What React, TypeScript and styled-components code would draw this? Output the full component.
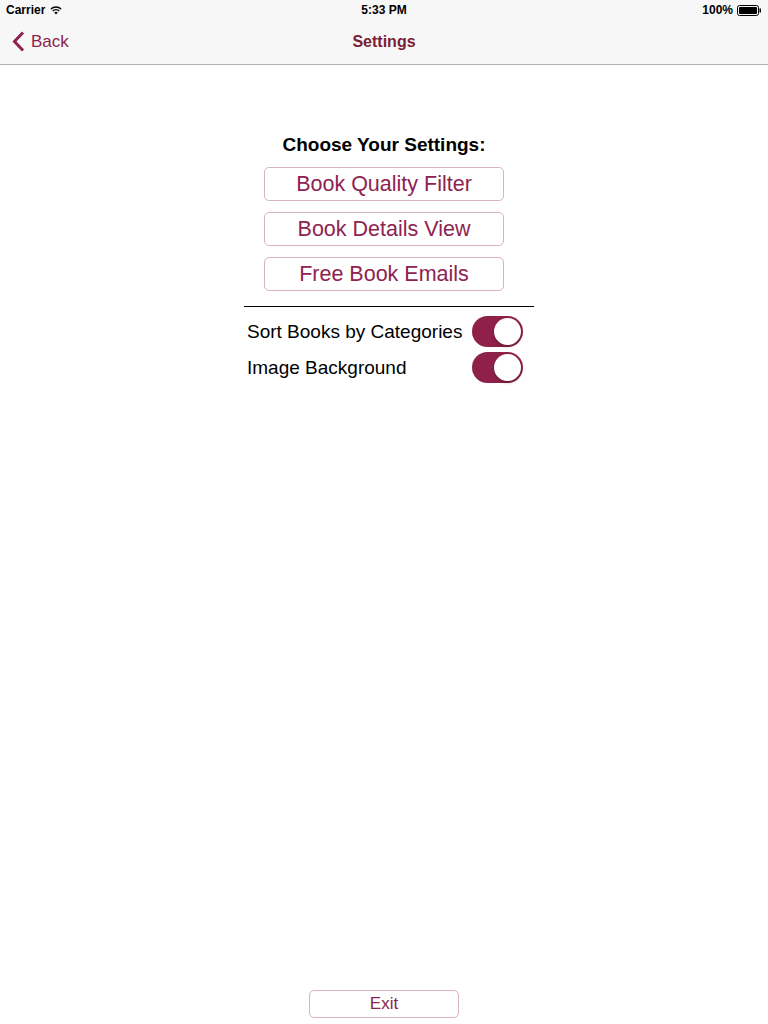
import styled, { createGlobalStyle } from 'styled-components';

const GlobalStyle = createGlobalStyle`
  html, body {
    margin: 0;
    padding: 0;
    background: #ffffff;
    font-family: "Liberation Sans", Arial, sans-serif;
  }
  * { box-sizing: border-box; }
`;

const Page = styled.div`
  height: 1024px;
  display: flex;
  flex-direction: column;
  background: #ffffff;
`;

const StatusBar = styled.div`
  height: 20px;
  display: grid;
  grid-template-columns: 1fr auto 1fr;
  align-items: center;
  padding: 0 6px;
  background: #f7f7f7;
  font-size: 12px;
  font-weight: 700;
  color: #000;
`;

const StatusLeft = styled.div`
  display: flex;
  align-items: center;
  gap: 5px;
`;

const StatusRight = styled.div`
  display: flex;
  align-items: center;
  justify-content: flex-end;
  gap: 4px;
`;

const NavBar = styled.div`
  height: 45px;
  display: grid;
  grid-template-columns: 1fr auto 1fr;
  align-items: center;
  padding: 0 12px 1px;
  background: #f7f7f7;
  border-bottom: 1px solid #b2b2b2;
`;

const BackButton = styled.div`
  display: flex;
  align-items: center;
  gap: 6px;
  color: #8e2350;
  font-size: 17px;
`;

const NavTitle = styled.div`
  color: #7b1d34;
  font-size: 16px;
  font-weight: 700;
`;

const Content = styled.div`
  width: 300px;
  margin: 0 auto;
  padding-top: 68px;
  display: flex;
  flex-direction: column;
  align-items: center;
`;

const Heading = styled.div`
  font-size: 19px;
  line-height: 23px;
  font-weight: 700;
  color: #000;
`;

const ButtonList = styled.div`
  margin-top: 11px;
  display: flex;
  flex-direction: column;
  gap: 11px;
`;

const OptionButton = styled.button<{ $width?: number; $height?: number; $size?: number }>`
  width: ${p => p.$width ?? 240}px;
  height: ${p => p.$height ?? 34}px;
  border: 1px solid #d8b3c3;
  border-radius: 5px;
  background: #ffffff;
  color: #8e2350;
  font-family: "Liberation Sans", Arial, sans-serif;
  font-size: ${p => p.$size ?? 21.5}px;
  padding: 0;
  cursor: pointer;
`;

/* the divider and switches sit 5px right of the centre line */
const ToggleSection = styled.div`
  width: 290px;
  margin-left: 10px;
  margin-top: 15px;
`;

const Divider = styled.div`
  height: 1px;
  background: #000;
`;

const ToggleList = styled.div`
  margin-top: 9px;
  display: flex;
  flex-direction: column;
  gap: 5px;
`;

const ToggleRow = styled.div`
  display: grid;
  grid-template-columns: 1fr 51px;
  align-items: center;
  padding: 0 11px 0 3px;
  height: 31px;
`;

const Label = styled.span`
  font-size: 19px;
  color: #000;
  white-space: nowrap;
`;

const Switch = styled.div<{ $on: boolean }>`
  width: 51px;
  height: 31px;
  border-radius: 16px;
  background: ${p => (p.$on ? '#8f2149' : '#e5e5e5')};
  display: flex;
  align-items: center;
  justify-content: ${p => (p.$on ? 'flex-end' : 'flex-start')};
  padding: 2px;
`;

const Knob = styled.div`
  width: 27px;
  height: 27px;
  border-radius: 50%;
  background: #ffffff;
  box-shadow: 0 2px 3px rgba(0, 0, 0, 0.25);
`;

const Footer = styled.div`
  margin-top: auto;
  padding-bottom: 6px;
  display: flex;
  justify-content: center;
`;

function Wifi() {
  return (
    <svg width="12" height="9" viewBox="0 0 12 9">
      <path d="M6 8.6 L4.2 6.6 A2.6 2.6 0 0 1 7.8 6.6 Z" fill="#000" />
      <path d="M2.7 5 A4.8 4.8 0 0 1 9.3 5" stroke="#000" strokeWidth="1.4" fill="none" />
      <path d="M0.9 3.1 A7.4 7.4 0 0 1 11.1 3.1" stroke="#000" strokeWidth="1.4" fill="none" />
    </svg>
  );
}

function Battery() {
  return (
    <svg width="25" height="11" viewBox="0 0 25 11">
      <rect x="0.5" y="0.5" width="21" height="10" rx="2" fill="none" stroke="#000" />
      <rect x="2" y="2" width="18" height="7" rx="1" fill="#000" />
      <rect x="22.5" y="3.5" width="1.5" height="4" fill="#000" />
    </svg>
  );
}

function Chevron() {
  return (
    <svg width="13" height="21" viewBox="0 0 13 21">
      <path d="M11 1.5 L2.5 10.5 L11 19.5" stroke="#8e2350" strokeWidth="3" fill="none" />
    </svg>
  );
}

export default function App() {
  const toggles = [
    { label: 'Sort Books by Categories', on: true },
    { label: 'Image Background', on: true },
  ];

  return (
    <Page>
      <GlobalStyle />
      <StatusBar>
        <StatusLeft>
          <span>Carrier</span>
          <Wifi />
        </StatusLeft>
        <span>5:33 PM</span>
        <StatusRight>
          <span>100%</span>
          <Battery />
        </StatusRight>
      </StatusBar>
      <NavBar>
        <BackButton>
          <Chevron />
          <span>Back</span>
        </BackButton>
        <NavTitle>Settings</NavTitle>
        <div />
      </NavBar>
      <Content>
        <Heading>Choose Your Settings:</Heading>
        <ButtonList>
          <OptionButton>Book Quality Filter</OptionButton>
          <OptionButton>Book Details View</OptionButton>
          <OptionButton>Free Book Emails</OptionButton>
        </ButtonList>
        <ToggleSection>
          <Divider />
          <ToggleList>
            {toggles.map(t => (
              <ToggleRow key={t.label}>
                <Label>{t.label}</Label>
                <Switch $on={t.on}>
                  <Knob />
                </Switch>
              </ToggleRow>
            ))}
          </ToggleList>
        </ToggleSection>
      </Content>
      <Footer>
        <OptionButton $width={150} $height={28} $size={17}>Exit</OptionButton>
      </Footer>
    </Page>
  );
}
